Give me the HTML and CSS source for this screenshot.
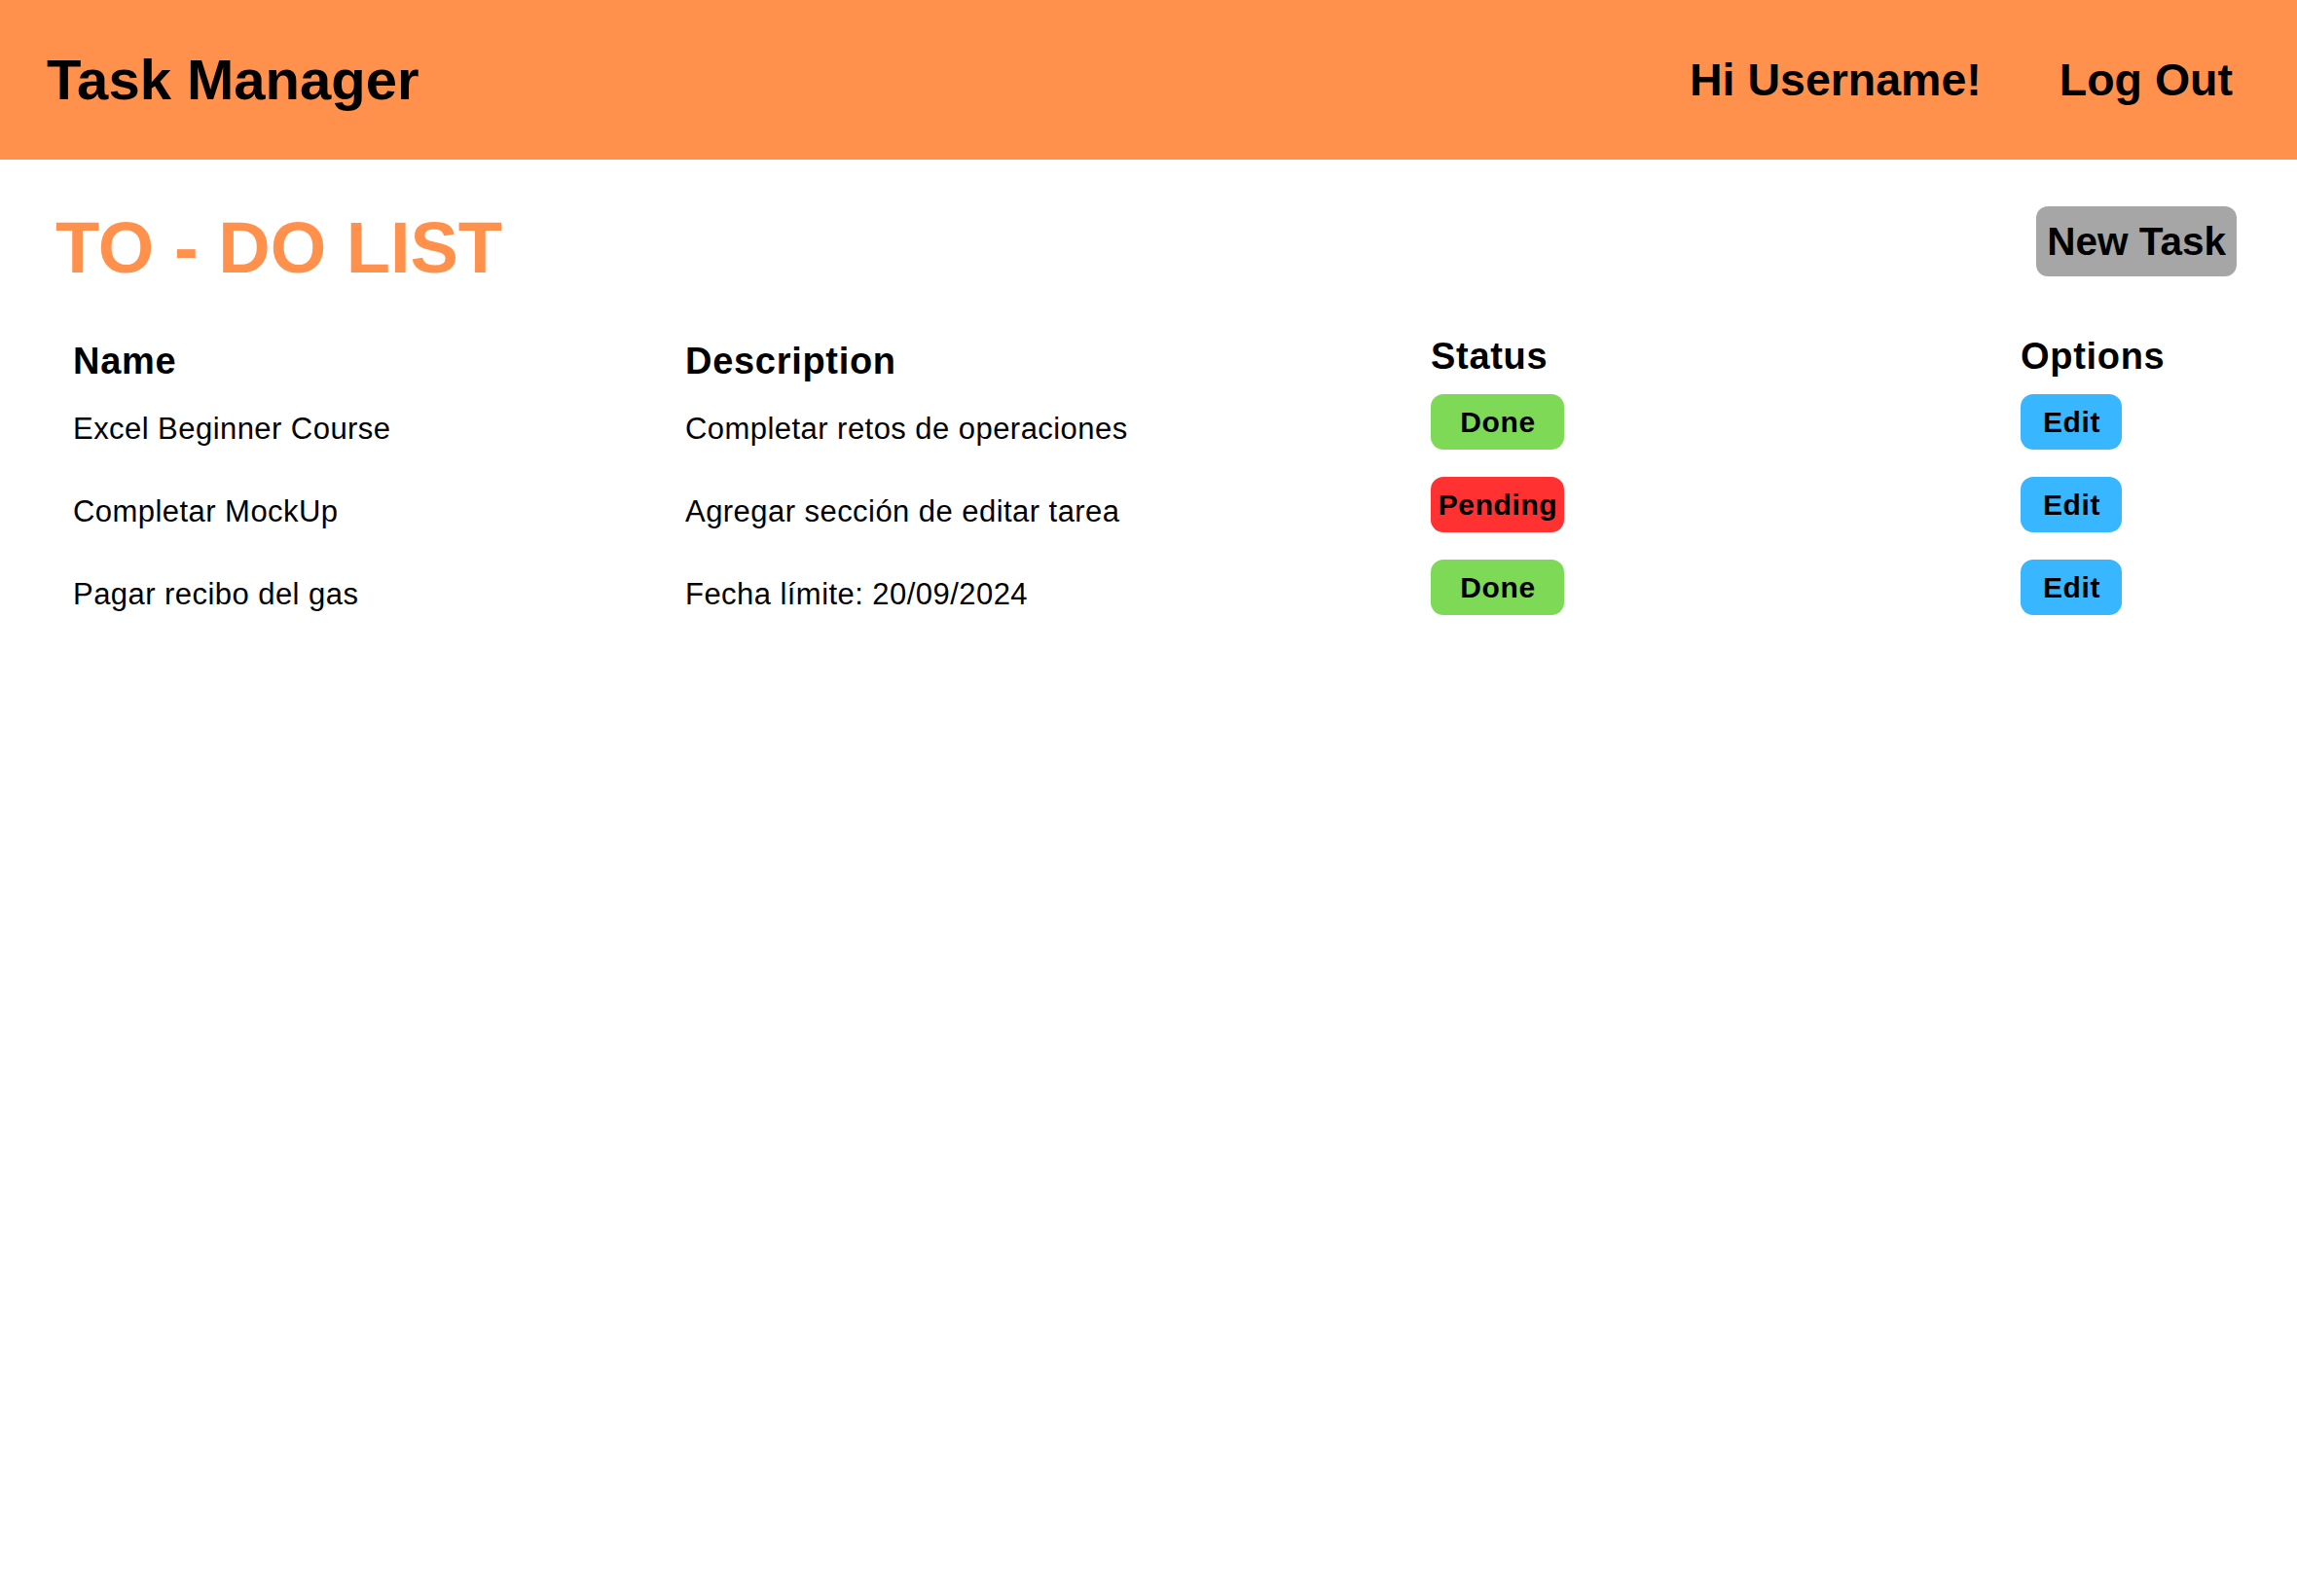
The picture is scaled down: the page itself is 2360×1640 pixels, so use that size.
FILE: index.html
```html
<!DOCTYPE html>
<html lang="es">
<head>
<meta charset="utf-8">
<title>Task Manager</title>
<link rel="stylesheet" href="styles.css">
</head>
<body>
<header class="topbar">
  <div class="brand">Task Manager</div>
  <nav class="user-nav">
    <span class="greeting">Hi Username!</span>
    <a class="logout" href="#">Log Out</a>
  </nav>
</header>
<main class="content">
  <div class="title-row">
    <h1 class="page-title">TO - DO LIST</h1>
    <button class="new-task">New Task</button>
  </div>
  <div class="task-table">
    <div class="row head-row">
      <div class="th th-low">Name</div>
      <div class="th th-low">Description</div>
      <div class="th">Status</div>
      <div class="th">Options</div>
    </div>
    <div class="row task-row">
      <div class="td">Excel Beginner Course</div>
      <div class="td">Completar retos de operaciones</div>
      <div class="tag-cell"><span class="tag tag-done">Done</span></div>
      <div class="tag-cell"><span class="tag tag-edit">Edit</span></div>
    </div>
    <div class="row task-row">
      <div class="td">Completar MockUp</div>
      <div class="td">Agregar sección de editar tarea</div>
      <div class="tag-cell"><span class="tag tag-pending">Pending</span></div>
      <div class="tag-cell"><span class="tag tag-edit">Edit</span></div>
    </div>
    <div class="row task-row">
      <div class="td">Pagar recibo del gas</div>
      <div class="td">Fecha límite: 20/09/2024</div>
      <div class="tag-cell"><span class="tag tag-done">Done</span></div>
      <div class="tag-cell"><span class="tag tag-edit">Edit</span></div>
    </div>
  </div>
</main>
</body>
</html>
```

FILE: styles.css
```css
* { box-sizing: border-box; }

html, body {
  margin: 0;
  padding: 0;
  background: #ffffff;
  color: #000000;
  font-family: "Liberation Sans", Arial, sans-serif;
}

.topbar {
  height: 164px;
  background: #FF914D;
  display: flex;
  align-items: center;
  justify-content: space-between;
  padding: 0 66px 0 48px;
}

.brand {
  font-size: 58px;
  font-weight: 700;
  line-height: 1;
}

.user-nav {
  display: flex;
  align-items: center;
  gap: 80px;
}

.greeting,
.logout {
  font-size: 46.5px;
  font-weight: 700;
  line-height: 1;
  color: #000000;
  text-decoration: none;
}

.content {
  padding: 0 62px 0 0;
}

.title-row {
  display: flex;
  justify-content: space-between;
  align-items: flex-start;
  padding: 48px 0 0 57px;
}

.page-title {
  margin: 6px 0 0 0;
  font-size: 74px;
  font-weight: 700;
  line-height: 1;
  color: #FF914D;
}

.new-task {
  height: 72px;
  padding: 0 11px;
  border: none;
  border-radius: 12px;
  background: #A6A6A6;
  font-family: "Liberation Sans", Arial, sans-serif;
  font-size: 40.5px;
  font-weight: 700;
  color: #000000;
  line-height: 1;
}

.task-table {
  padding-left: 75px;
  margin-top: 55px;
}

.row {
  display: grid;
  grid-template-columns: 629px 766px 606px 1fr;
}

.head-row {
  margin-bottom: 15px;
}

.th {
  font-size: 38px;
  font-weight: 700;
  line-height: 38px;
  letter-spacing: 0.7px;
}

.th-low {
  padding-top: 5px;
}

.task-row {
  height: 57px;
  margin-bottom: 28px;
}

.td {
  padding-top: 20px;
  font-size: 31px;
  line-height: 31px;
  letter-spacing: 0.45px;
}

.tag-cell {
  display: flex;
  align-items: flex-start;
}

.tag {
  display: flex;
  align-items: center;
  justify-content: center;
  height: 57px;
  border-radius: 13px;
  font-size: 30px;
  font-weight: 700;
  letter-spacing: 0.6px;
  padding-left: 1px;
  line-height: 1;
}

.tag-done {
  width: 137px;
  background: #7ED957;
}

.tag-pending {
  width: 137px;
  background: #FF3131;
}

.tag-edit {
  width: 104px;
  background: #38B6FF;
}
```
